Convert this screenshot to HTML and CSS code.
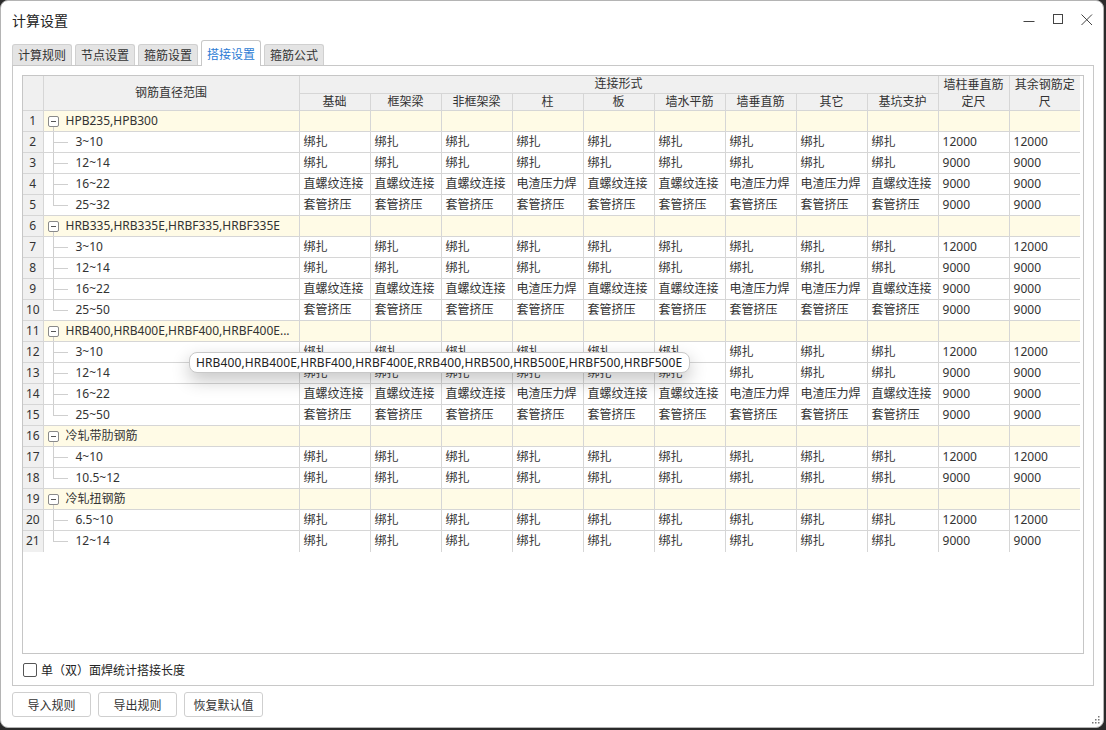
FILE: index.html
```html
<!DOCTYPE html>
<html lang="zh-CN">
<head>
<meta charset="utf-8">
<title>计算设置</title>
<link rel="stylesheet" href="styles.css">
</head>
<body>
<div class="window">
  <div class="titlebar">
    <div class="title">计算设置</div>
    <div class="controls">
      <svg class="ctl" width="14" height="14" viewBox="0 0 14 14"><path d="M1.5 8.5H12.5" stroke="#444" stroke-width="1" fill="none"/></svg>
      <svg class="ctl" width="14" height="14" viewBox="0 0 14 14"><rect x="2.5" y="1.5" width="9" height="9" stroke="#444" stroke-width="1" fill="none"/></svg>
      <svg class="ctl" width="14" height="14" viewBox="0 0 14 14"><path d="M1.5 1.5L12 12M12 1.5L1.5 12" stroke="#444" stroke-width="1" fill="none"/></svg>
    </div>
  </div>
  <div class="tabs">
    <div class="tab">计算规则</div>
    <div class="tab">节点设置</div>
    <div class="tab">箍筋设置</div>
    <div class="tab active">搭接设置</div>
    <div class="tab">箍筋公式</div>
  </div>
  <div class="panel">
    <div class="grid">
      <table class="sheet">
        <colgroup>
          <col class="w-n"><col class="w-r">
          <col class="w-c"><col class="w-c"><col class="w-c"><col class="w-c"><col class="w-c"><col class="w-c"><col class="w-c"><col class="w-c"><col class="w-c"><col class="w-c"><col class="w-c">
        </colgroup>
        <thead>
          <tr class="h1">
            <th rowspan="2" class="hn"></th>
            <th rowspan="2">钢筋直径范围</th>
            <th colspan="9">连接形式</th>
            <th rowspan="2" class="wrap">墙柱垂直筋定尺</th>
            <th rowspan="2" class="wrap">其余钢筋定尺</th>
          </tr>
          <tr class="h2">
            <th>基础</th><th>框架梁</th><th>非框架梁</th><th>柱</th><th>板</th><th>墙水平筋</th><th>墙垂直筋</th><th>其它</th><th>基坑支护</th>
          </tr>
        </thead>
        <tbody>
          <tr class="grp"><td class="n">1</td><td class="gname"><span class="minus"></span>HPB235,HPB300</td><td></td><td></td><td></td><td></td><td></td><td></td><td></td><td></td><td></td><td></td><td></td></tr>
          <tr><td class="n">2</td><td class="child">3~10</td><td>绑扎</td><td>绑扎</td><td>绑扎</td><td>绑扎</td><td>绑扎</td><td>绑扎</td><td>绑扎</td><td>绑扎</td><td>绑扎</td><td>12000</td><td>12000</td></tr>
          <tr><td class="n">3</td><td class="child">12~14</td><td>绑扎</td><td>绑扎</td><td>绑扎</td><td>绑扎</td><td>绑扎</td><td>绑扎</td><td>绑扎</td><td>绑扎</td><td>绑扎</td><td>9000</td><td>9000</td></tr>
          <tr><td class="n">4</td><td class="child">16~22</td><td>直螺纹连接</td><td>直螺纹连接</td><td>直螺纹连接</td><td>电渣压力焊</td><td>直螺纹连接</td><td>直螺纹连接</td><td>电渣压力焊</td><td>电渣压力焊</td><td>直螺纹连接</td><td>9000</td><td>9000</td></tr>
          <tr><td class="n">5</td><td class="child last">25~32</td><td>套管挤压</td><td>套管挤压</td><td>套管挤压</td><td>套管挤压</td><td>套管挤压</td><td>套管挤压</td><td>套管挤压</td><td>套管挤压</td><td>套管挤压</td><td>9000</td><td>9000</td></tr>
          <tr class="grp"><td class="n">6</td><td class="gname"><span class="minus"></span>HRB335,HRB335E,HRBF335,HRBF335E</td><td></td><td></td><td></td><td></td><td></td><td></td><td></td><td></td><td></td><td></td><td></td></tr>
          <tr><td class="n">7</td><td class="child">3~10</td><td>绑扎</td><td>绑扎</td><td>绑扎</td><td>绑扎</td><td>绑扎</td><td>绑扎</td><td>绑扎</td><td>绑扎</td><td>绑扎</td><td>12000</td><td>12000</td></tr>
          <tr><td class="n">8</td><td class="child">12~14</td><td>绑扎</td><td>绑扎</td><td>绑扎</td><td>绑扎</td><td>绑扎</td><td>绑扎</td><td>绑扎</td><td>绑扎</td><td>绑扎</td><td>9000</td><td>9000</td></tr>
          <tr><td class="n">9</td><td class="child">16~22</td><td>直螺纹连接</td><td>直螺纹连接</td><td>直螺纹连接</td><td>电渣压力焊</td><td>直螺纹连接</td><td>直螺纹连接</td><td>电渣压力焊</td><td>电渣压力焊</td><td>直螺纹连接</td><td>9000</td><td>9000</td></tr>
          <tr><td class="n">10</td><td class="child last">25~50</td><td>套管挤压</td><td>套管挤压</td><td>套管挤压</td><td>套管挤压</td><td>套管挤压</td><td>套管挤压</td><td>套管挤压</td><td>套管挤压</td><td>套管挤压</td><td>9000</td><td>9000</td></tr>
          <tr class="grp"><td class="n">11</td><td class="gname"><span class="minus"></span>HRB400,HRB400E,HRBF400,HRBF400E...</td><td></td><td></td><td></td><td></td><td></td><td></td><td></td><td></td><td></td><td></td><td></td></tr>
          <tr><td class="n">12</td><td class="child">3~10</td><td>绑扎</td><td>绑扎</td><td>绑扎</td><td>绑扎</td><td>绑扎</td><td>绑扎</td><td>绑扎</td><td>绑扎</td><td>绑扎</td><td>12000</td><td>12000</td></tr>
          <tr><td class="n">13</td><td class="child">12~14</td><td>绑扎</td><td>绑扎</td><td>绑扎</td><td>绑扎</td><td>绑扎</td><td>绑扎</td><td>绑扎</td><td>绑扎</td><td>绑扎</td><td>9000</td><td>9000</td></tr>
          <tr><td class="n">14</td><td class="child">16~22</td><td>直螺纹连接</td><td>直螺纹连接</td><td>直螺纹连接</td><td>电渣压力焊</td><td>直螺纹连接</td><td>直螺纹连接</td><td>电渣压力焊</td><td>电渣压力焊</td><td>直螺纹连接</td><td>9000</td><td>9000</td></tr>
          <tr><td class="n">15</td><td class="child last">25~50</td><td>套管挤压</td><td>套管挤压</td><td>套管挤压</td><td>套管挤压</td><td>套管挤压</td><td>套管挤压</td><td>套管挤压</td><td>套管挤压</td><td>套管挤压</td><td>9000</td><td>9000</td></tr>
          <tr class="grp"><td class="n">16</td><td class="gname"><span class="minus"></span>冷轧带肋钢筋</td><td></td><td></td><td></td><td></td><td></td><td></td><td></td><td></td><td></td><td></td><td></td></tr>
          <tr><td class="n">17</td><td class="child">4~10</td><td>绑扎</td><td>绑扎</td><td>绑扎</td><td>绑扎</td><td>绑扎</td><td>绑扎</td><td>绑扎</td><td>绑扎</td><td>绑扎</td><td>12000</td><td>12000</td></tr>
          <tr><td class="n">18</td><td class="child last">10.5~12</td><td>绑扎</td><td>绑扎</td><td>绑扎</td><td>绑扎</td><td>绑扎</td><td>绑扎</td><td>绑扎</td><td>绑扎</td><td>绑扎</td><td>9000</td><td>9000</td></tr>
          <tr class="grp"><td class="n">19</td><td class="gname"><span class="minus"></span>冷轧扭钢筋</td><td></td><td></td><td></td><td></td><td></td><td></td><td></td><td></td><td></td><td></td><td></td></tr>
          <tr><td class="n">20</td><td class="child">6.5~10</td><td>绑扎</td><td>绑扎</td><td>绑扎</td><td>绑扎</td><td>绑扎</td><td>绑扎</td><td>绑扎</td><td>绑扎</td><td>绑扎</td><td>12000</td><td>12000</td></tr>
          <tr><td class="n">21</td><td class="child last">12~14</td><td>绑扎</td><td>绑扎</td><td>绑扎</td><td>绑扎</td><td>绑扎</td><td>绑扎</td><td>绑扎</td><td>绑扎</td><td>绑扎</td><td>9000</td><td>9000</td></tr>
        </tbody>
      </table>
    </div>
    <label class="check"><span class="box"></span>单（双）面焊统计搭接长度</label>
  </div>
  <div class="buttons">
    <button class="btn">导入规则</button>
    <button class="btn">导出规则</button>
    <button class="btn">恢复默认值</button>
  </div>
  <div class="tooltip">HRB400,HRB400E,HRBF400,HRBF400E,RRB400,HRB500,HRB500E,HRBF500,HRBF500E</div>
  <svg class="grip" width="8" height="8" viewBox="0 0 8 8">
    <rect x="6" y="0" width="1.5" height="1.5" fill="#777"/>
    <rect x="3" y="3" width="1.5" height="1.5" fill="#777"/><rect x="6" y="3" width="1.5" height="1.5" fill="#777"/>
    <rect x="0" y="6" width="1.5" height="1.5" fill="#777"/><rect x="3" y="6" width="1.5" height="1.5" fill="#777"/><rect x="6" y="6" width="1.5" height="1.5" fill="#777"/>
  </svg>
</div>
</body>
</html>
```

FILE: styles.css
```css
* { box-sizing: border-box; }
html, body { margin: 0; padding: 0; }
body {
  width: 1106px;
  height: 730px;
  overflow: hidden;
  background: #2b2b2b;
  font-family: "Noto Sans", "Noto Sans CJK SC", sans-serif;
  font-size: 12px;
  color: #333;
}
.window {
  position: relative;
  width: 1104px;
  height: 728px;
  background: #fff;
  border: 1px solid #b4b4b4;
  border-radius: 8px;
  display: flex;
  flex-direction: column;
}
.titlebar {
  height: 39px;
  display: flex;
  align-items: center;
  justify-content: space-between;
  padding-left: 11px;
  padding-right: 9px;
}
.title {
  font-family: "Noto Sans CJK SC", sans-serif;
  font-size: 14px;
  color: #222;
  margin-top: -1px;
}
.controls {
  display: flex;
  gap: 15px;
  margin-top: -1px;
}
.ctl { display: block; }
.tabs {
  height: 25px;
  display: flex;
  align-items: flex-end;
  gap: 3px;
  padding-left: 11px;
  position: relative;
  z-index: 1;
}
.tab {
  height: 21px;
  padding: 0 5px;
  background: #e4e4e4;
  border: 1px solid #d0d0d0;
  border-bottom: none;
  border-radius: 3px 3px 0 0;
  font-family: "Noto Sans CJK SC", sans-serif;
  font-size: 12px;
  line-height: 20px;
  color: #333;
}
.tab.active {
  height: 26px;
  margin-bottom: -1px;
  background: #fff;
  color: #2b7bd4;
  line-height: 25px;
  border-color: #c8c8c8;
}
.panel {
  margin-left: 11px;
  width: 1082px;
  height: 621px;
  border: 1px solid #c8c8c8;
  padding: 9px 9px 0 9px;
  display: flex;
  flex-direction: column;
}
.grid {
  flex: 1;
  border: 1px solid #c6c6c6;
  background: #fff;
  overflow: hidden;
}
.sheet {
  width: 1057px;
  table-layout: fixed;
  border-collapse: collapse;
  border-style: hidden;
}
.w-n { width: 20px; }
.w-r { width: 256px; }
.w-c { width: 71px; }
.sheet th, .sheet td {
  border: 1px solid #d6d6d6;
  padding: 0 0 0 4px;
  white-space: nowrap;
  overflow: hidden;
  font-weight: normal;
  line-height: 16px;
  vertical-align: middle;
}
.sheet th {
  background: #f0f0f0;
  text-align: center;
  padding: 0;
  color: #333;
}
.sheet th.wrap {
  white-space: normal;
  line-height: 17px;
}
.h1 { height: 17px; }
.h2 { height: 17px; }
.sheet tbody tr { height: 21px; }
.sheet td.n {
  background: #f0f0f0;
  text-align: center;
  padding: 0;
}
.grp td { background: #fffbe6; }
.grp td.n { background: #f0f0f0; }
.gname {
  position: relative;
  padding-left: 22px !important;
}
.gname::after {
  content: "";
  position: absolute;
  left: 9px;
  top: 16px;
  bottom: 0;
  border-left: 1px solid #cfcfcf;
}
.minus {
  position: absolute;
  left: 4px;
  top: 5px;
  width: 11px;
  height: 11px;
  border: 1px solid #8a8a8a;
  border-radius: 2px;
  background: #fff;
}
.minus::after {
  content: "";
  position: absolute;
  left: 2px;
  top: 4px;
  width: 5px;
  border-top: 1px solid #555;
}
.child {
  position: relative;
  padding-left: 32px !important;
}
.child::before {
  content: "";
  position: absolute;
  left: 9px;
  top: 0;
  bottom: 0;
  border-left: 1px solid #cfcfcf;
}
.child.last::before { bottom: 50%; }
.child::after {
  content: "";
  position: absolute;
  left: 9px;
  top: 50%;
  width: 15px;
  border-top: 1px solid #cfcfcf;
}
.check {
  height: 31px;
  display: flex;
  align-items: center;
  gap: 4px;
  padding-left: 1px;
  font-family: "Noto Sans CJK SC", sans-serif;
  font-size: 12px;
  color: #222;
}
.box {
  width: 14px;
  height: 14px;
  border: 1px solid #555;
  border-radius: 2px;
  background: #fff;
}
.buttons {
  display: flex;
  gap: 7px;
  margin-top: 6px;
  padding-left: 11px;
}
.btn {
  width: 79px;
  height: 25px;
  background: #fff;
  border: 1px solid #cfcfcf;
  border-radius: 3px;
  font-family: "Noto Sans CJK SC", sans-serif;
  font-size: 12px;
  color: #333;
  padding: 0;
}
.tooltip {
  position: absolute;
  left: 188px;
  top: 351px;
  width: 501px;
  height: 21px;
  background: #fff;
  border: 1px solid #c8c8c8;
  border-radius: 8px;
  box-shadow: 0 7px 18px rgba(0, 0, 0, 0.24);
  font-size: 12px;
  letter-spacing: 0.11px;
  line-height: 19px;
  padding-left: 6px;
  color: #222;
  white-space: nowrap;
  z-index: 5;
}
.grip {
  position: absolute;
  right: 3px;
  bottom: 3px;
}
```
